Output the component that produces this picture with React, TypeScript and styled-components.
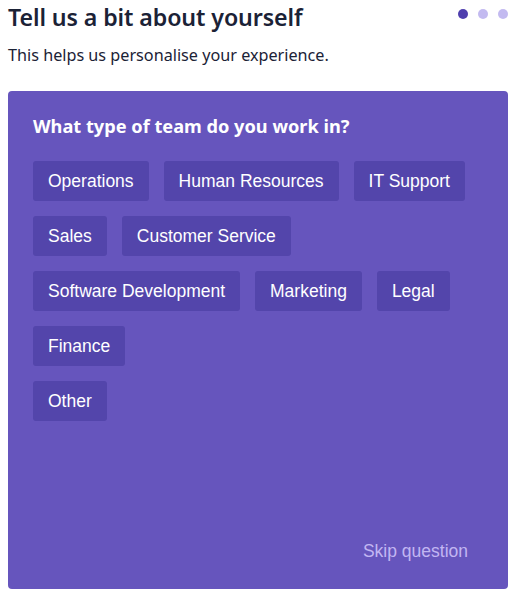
import React from 'react'
import styled, { createGlobalStyle } from 'styled-components'

const GlobalStyle = createGlobalStyle`
  html, body {
    margin: 0;
    padding: 0;
    background: #ffffff;
  }
  body {
    padding: 0 8px;
    font-family: 'Noto Sans', 'Open Sans', sans-serif;
  }
`;

const Page = styled.div`
  width: 500px;
  display: flex;
  flex-direction: column;
`;

const Header = styled.div`
  display: flex;
  justify-content: space-between;
  align-items: flex-start;
  height: 38px;
`;

const Title = styled.h1`
  margin: 1px 0 0 0;
  font-size: 23.2px;
  font-weight: 600;
  color: #1b2236;
  line-height: 32px;
  letter-spacing: -0.1px;
`;

const Dots = styled.div`
  display: flex;
  gap: 10px;
  padding-top: 9px;
`;

const Dot = styled.span<{ $active?: boolean }>`
  width: 10px;
  height: 10px;
  border-radius: 50%;
  background: ${p => (p.$active ? '#4f3fae' : '#c3baf0')};
`;

const Subtitle = styled.p`
  margin: 5px 0 0 0;
  font-size: 16.2px;
  color: #1b2236;
  line-height: 24px;
`;

const Card = styled.div`
  margin-top: 24px;
  background: #6655bd;
  border-radius: 4px;
  height: 498px;
  padding: 22px 25px 18px 25px;
  box-sizing: border-box;
  display: flex;
  flex-direction: column;
`;

const Question = styled.h2`
  margin: 0;
  font-size: 18.2px;
  font-weight: 700;
  color: #ffffff;
  line-height: 26px;
`;

const Options = styled.div`
  margin-top: 22px;
  display: flex;
  flex-direction: column;
  gap: 15px;
`;

const OptionRow = styled.div`
  display: flex;
  flex-wrap: wrap;
  gap: 15px;
`;

const Chip = styled.button`
  height: 40px;
  padding: 0 15px;
  background: #5345ab;
  border: none;
  border-radius: 3px;
  color: #ffffff;
  font-family: 'Liberation Sans', Arial, sans-serif;
  font-size: 17.5px;
  cursor: pointer;

  &:hover {
    opacity: 0.9;
  }
`;

const Footer = styled.div`
  margin-top: auto;
  display: flex;
  justify-content: flex-end;
`;

const Skip = styled.button`
  background: none;
  border: none;
  padding: 0 15px;
  height: 40px;
  color: #c2b6f2;
  font-family: 'Liberation Sans', Arial, sans-serif;
  font-size: 17.5px;
  cursor: pointer;
`;

const teams = [
  'Operations',
  'Human Resources',
  'IT Support',
  'Sales',
  'Customer Service',
  'Software Development',
  'Marketing',
  'Legal',
  'Finance',
]

const App = () => {
  return (
    <Page>
      <GlobalStyle />
      <Header>
        <Title>Tell us a bit about yourself</Title>
        <Dots>
          <Dot $active />
          <Dot />
          <Dot />
        </Dots>
      </Header>
      <Subtitle>This helps us personalise your experience.</Subtitle>

      <Card>
        <Question>What type of team do you work in?</Question>
        <Options>
          <OptionRow>
            {teams.map(t => (
              <Chip key={t}>{t}</Chip>
            ))}
          </OptionRow>
          <OptionRow>
            <Chip>Other</Chip>
          </OptionRow>
        </Options>
        <Footer>
          <Skip>Skip question</Skip>
        </Footer>
      </Card>
    </Page>
  )
}

export default App
